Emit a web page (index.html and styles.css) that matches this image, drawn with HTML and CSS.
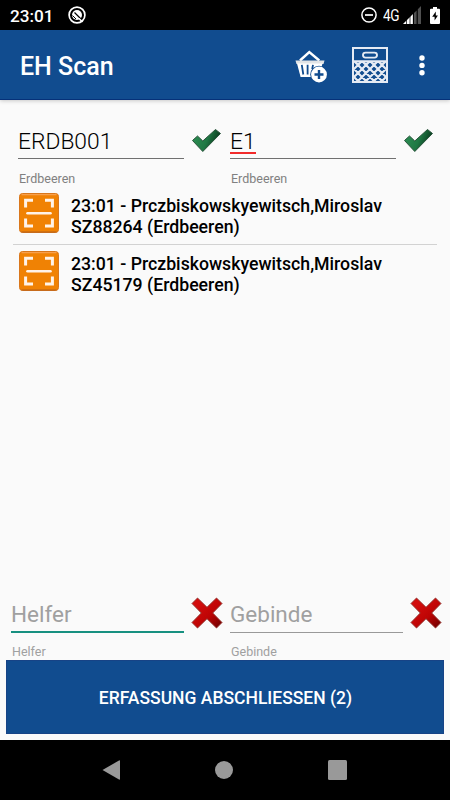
FILE: index.html
```
<!DOCTYPE html>
<html lang="de">

<head>
  <meta charset="UTF-8" />
  <meta name="viewport" content="width=device-width, initial-scale=1.0" />
  <title>EH Scan</title>
  <link rel="stylesheet" href="styles.css">
</head>

<body>
  <svg class="defs" width="0" height="0">
    <defs>
      <linearGradient id="green" x1="0" y1="0" x2="1" y2="0.3">
        <stop offset="0" stop-color="#2f9255" />
        <stop offset="0.6" stop-color="#1f7844" />
        <stop offset="1" stop-color="#0a3a1e" />
      </linearGradient>
      <linearGradient id="red" x1="0" y1="0" x2="1" y2="1">
        <stop offset="0.2" stop-color="#d20d0d" />
        <stop offset="0.6" stop-color="#bd0404" />
        <stop offset="0.95" stop-color="#700000" />
      </linearGradient>
      <symbol id="check" viewBox="0 0 31 25">
        <path d="M1.5 12.5 L6.5 8 L11.8 13 L24.5 1.5 L29.5 5.5 L11.8 23.5 Z" fill="url(#green)" stroke="#28533a" stroke-width="1" stroke-linejoin="round" />
      </symbol>
      <symbol id="cross" viewBox="0 0 32 32">
        <path d="M6.5 1 L16 10.3 L25.5 1 L31 6.5 L21.7 16 L31 25.5 L25.5 31 L16 21.7 L6.5 31 L1 25.5 L10.3 16 L1 6.5 Z" fill="url(#red)" stroke="#8e2d27" stroke-width="0.9" stroke-linejoin="round" />
      </symbol>
      <symbol id="scan" viewBox="0 0 40 40">
        <rect x="0.5" y="0.5" width="39" height="39" rx="3" fill="#f08204" stroke="#d9771c" />
        <path d="M2.5 1.7 H37.5" stroke="#f8a04c" stroke-width="1.2" />
        <path d="M2.5 39 H37.5" stroke="#b5601a" stroke-width="1" />
        <path d="M6.6 14.5 V7.2 H14 M26 7.2 H33.4 V14.5 M33.4 25.5 V33 H26 M14 33 H6.6 V25.5" fill="none" stroke="#fff3e8" stroke-width="3" />
        <path d="M8.5 20.2 H31.5" stroke="#fff3e8" stroke-width="2.6" stroke-linecap="round" />
      </symbol>
    </defs>
  </svg>

  <div class="status-bar">
    <span class="clock">23:01</span>
    <svg class="status-app" width="18" height="18" viewBox="0 0 18 18">
      <circle cx="9" cy="9" r="7.9" fill="none" stroke="#fff" stroke-width="1.7" />
      <circle cx="9" cy="9" r="5" fill="#fff" />
      <path d="M6.5 6.5 L13 13" stroke="#000" stroke-width="1.3" />
      <path d="M4.5 9.5 L8 13" stroke="#000" stroke-width="1" />
      <path d="M11 12.5 L14.5 16" stroke="#fff" stroke-width="1.6" />
    </svg>
    <div class="status-right">
      <svg width="16" height="16" viewBox="0 0 16 16">
        <circle cx="8" cy="8" r="7.1" fill="none" stroke="#fff" stroke-width="1.5" />
        <path d="M4 8 H12" stroke="#fff" stroke-width="1.7" />
      </svg>
      <span class="network">4G</span>
      <svg class="signal" width="18" height="18" viewBox="0 0 18 18">
        <path d="M0 18 L10 8 V18 Z" fill="#fff" />
        <path d="M11 18 V7 L13.6 4.4 V18 Z M14.8 18 V3.2 L18 0 V18 Z" fill="#505050" />
        <path d="M3.5 13 V18 M7 9 V18 M10.3 6 V18" stroke="#000" stroke-width="0.7" />
      </svg>
      <svg class="battery" width="10" height="17" viewBox="0 0 10 17">
        <path d="M3 0 H7 V1.7 H9 Q10 1.7 10 2.7 V16 Q10 17 9 17 H1 Q0 17 0 16 V2.7 Q0 1.7 1 1.7 H3 Z" fill="#fff" />
        <path d="M5.8 4.5 L2.2 9.8 H4.6 V13.6 L7.9 8.4 H5.8 Z" fill="#000" />
      </svg>
    </div>
  </div>

  <div class="toolbar">
    <h1>EH Scan</h1>
    <svg class="basket" width="33" height="33" viewBox="0 0 33 33">
      <path d="M5 10.5 L14.3 2 L24.3 10.5" fill="none" stroke="#fff" stroke-width="2.4" />
      <path d="M0.5 10.5 H29.5 L28.5 14 H1.5 Z" fill="#e2e4e6" />
      <path d="M2 13.5 H27.5 L26 19 L18 27 H5.6 Z" fill="#fff" />
      <path d="M6.8 14.8 L8.3 24.5 M12.6 14.8 V24.5 M18 14.8 L17.2 19" stroke="#114c8f" stroke-width="1.8" />
      <circle cx="24" cy="24.5" r="8.8" fill="#114c8f" />
      <circle cx="24" cy="24.5" r="7.9" fill="#fff" />
      <path d="M24 20 V29 M19.5 24.5 H28.5" stroke="#114c8f" stroke-width="2.4" />
    </svg>
    <svg class="crate" width="36" height="36" viewBox="0 0 36 36">
      <g fill="none" stroke="#e6ebf4">
        <svg x="2" y="14" width="32" height="20" viewBox="0 0 32 20">
          <path d="M-16 0 L4 20 M-8 0 L12 20 M0 0 L20 20 M8 0 L28 20 M16 0 L36 20 M24 0 L44 20 M8 0 L-12 20 M16 0 L-4 20 M24 0 L4 20 M32 0 L12 20 M40 0 L20 20 M48 0 L28 20" stroke-width="2.2" />
        </svg>
        <rect x="1" y="1" width="34" height="34" stroke-width="2" />
        <path d="M1 14.3 H35" stroke-width="2.2" />
        <rect x="11" y="5.6" width="14" height="5" rx="2.5" stroke-width="1.9" />
      </g>
    </svg>
    <svg class="more" width="6" height="21" viewBox="0 0 6 21">
      <circle cx="3" cy="3" r="2.7" fill="#fff" />
      <circle cx="3" cy="10.4" r="2.7" fill="#fff" />
      <circle cx="3" cy="17.8" r="2.7" fill="#fff" />
    </svg>
  </div>

  <div class="content">
    <div class="fields fields-top">
      <div class="field">
        <div class="field-value">ERDB001</div>
        <div class="field-label">Erdbeeren</div>
      </div>
      <svg class="check" width="31" height="25"><use href="#check" /></svg>
      <div class="field">
        <div class="field-value"><span class="misspelled">E1</span></div>
        <div class="field-label">Erdbeeren</div>
      </div>
      <svg class="check" width="31" height="25"><use href="#check" /></svg>
    </div>

    <ul class="scan-list">
      <li class="scan-item">
        <svg width="40" height="40"><use href="#scan" /></svg>
        <p>23:01 - Prczbiskowskyewitsch,Miroslav<br>SZ88264 (Erdbeeren)</p>
      </li>
      <li class="scan-item">
        <svg width="40" height="40"><use href="#scan" /></svg>
        <p>23:01 - Prczbiskowskyewitsch,Miroslav<br>SZ45179 (Erdbeeren)</p>
      </li>
    </ul>

    <div class="fields fields-bottom">
      <div class="field">
        <div class="field-value focused">Helfer</div>
        <div class="field-label">Helfer</div>
      </div>
      <svg class="cross" width="32" height="32"><use href="#cross" /></svg>
      <div class="field">
        <div class="field-value">Gebinde</div>
        <div class="field-label">Gebinde</div>
      </div>
      <svg class="cross" width="32" height="32"><use href="#cross" /></svg>
    </div>

    <button class="submit">ERFASSUNG ABSCHLIESSEN (2)</button>
  </div>

  <div class="nav-bar">
    <svg width="18" height="20" viewBox="0 0 18 20"><path d="M0.5 10 L17 0.5 Q18 0 18 1 V19 Q18 20 17 19.5 Z" fill="#999" /></svg>
    <svg width="18" height="18" viewBox="0 0 18 18"><circle cx="9" cy="9" r="9" fill="#999" /></svg>
    <svg width="19" height="20" viewBox="0 0 19 20"><rect width="19" height="20" rx="1.5" fill="#999" /></svg>
  </div>
</body>

</html>
```
FILE: styles.css
```
* {
  box-sizing: border-box;
}

body {
  margin: 0;
  height: 800px;
  display: flex;
  flex-direction: column;
  background: #fafafa;
  color: #000;
  font-family: Roboto, "Liberation Sans", sans-serif;
  overflow: hidden;
}

svg {
  display: block;
  flex: none;
}

.defs {
  position: absolute;
}

/* status bar */
.status-bar {
  height: 30px;
  flex: none;
  display: flex;
  align-items: center;
  padding: 0 10px;
  background: #000;
  color: #fff;
}

.clock {
  width: 58px;
  font-size: 17.2px;
  font-weight: 500;
  line-height: 30px;
  padding-top: 2px;
}

.status-right {
  margin-left: auto;
  display: flex;
  align-items: center;
}

.network {
  width: 20px;
  margin-left: 6px;
  font-size: 16px;
  letter-spacing: -0.6px;
  transform: scaleX(0.85);
  transform-origin: left;
}

.signal {
  margin-right: 9px;
}

/* toolbar */
.toolbar {
  height: 70px;
  flex: none;
  display: flex;
  align-items: center;
  padding: 0 25px 0 20px;
  background: #114c8f;
  border-bottom: 1px solid #063179;
  box-shadow: 0 1px 4px rgba(0, 0, 0, 0.2);
  color: #fff;
}

.toolbar h1 {
  margin: 5px auto 0 0;
  font-size: 25px;
  font-weight: 500;
  line-height: 30px;
}

.basket {
  margin: 4px 24px 0 0;
}

.crate {
  margin: 1px 31px 0 0;
}

.more {
  margin-top: 1px;
}

/* content */
.content {
  flex: 1;
  display: flex;
  flex-direction: column;
  padding: 22px 6px 6px;
}

.fields {
  display: grid;
}

.fields-top {
  grid-template-columns: 166px 46px 166px 46px;
  padding-left: 12px;
}

.fields-bottom {
  grid-template-columns: 173px 46px 173px 46px;
  margin-top: auto;
  padding-left: 5px;
}

.field-value {
  height: 37px;
  border-bottom: 1px solid #707070;
  font-size: 22.8px;
  font-weight: 300;
  line-height: 39px;
}

.field-label {
  padding: 12px 0 0 1px;
  font-size: 12.5px;
  line-height: 16px;
  color: #808080;
}

.misspelled {
  display: inline-block;
  height: 32px;
  border-bottom: 2px solid #f12a2a;
}

.check {
  margin: 6px 0 0 7px;
}

.fields-bottom .field-value {
  height: 38px;
  border-color: #999;
  font-size: 22.5px;
  font-weight: 400;
  color: #a0a0a0;
}

.fields-bottom .field-value.focused {
  border-bottom: 2px solid #179080;
}

.fields-bottom .field-label {
  padding-top: 11px;
  color: #a0a0a0;
}

.cross {
  margin: 2px 0 0 7px;
}

.scan-list {
  list-style: none;
  margin: 0;
  padding: 0 7px;
}

.scan-item {
  display: flex;
  height: 58px;
  padding: 6px 6px 0;
}

.scan-item:first-child {
  border-bottom: 1px solid #d2d2d2;
}

.scan-item p {
  margin: 3px 0 0 12px;
  font-size: 17.7px;
  font-weight: 500;
  line-height: 20.5px;
  white-space: nowrap;
}

.submit {
  height: 74px;
  border: 1px solid #174386;
  padding: 1px 0 0 1px;
  background: #114c8f;
  color: #fff;
  font-family: inherit;
  font-size: 17.5px;
  font-weight: 500;
}

/* navigation bar */
.nav-bar {
  height: 60px;
  flex: none;
  display: flex;
  justify-content: space-between;
  align-items: center;
  padding: 0 103px 0 102px;
  background: #000;
}
```
